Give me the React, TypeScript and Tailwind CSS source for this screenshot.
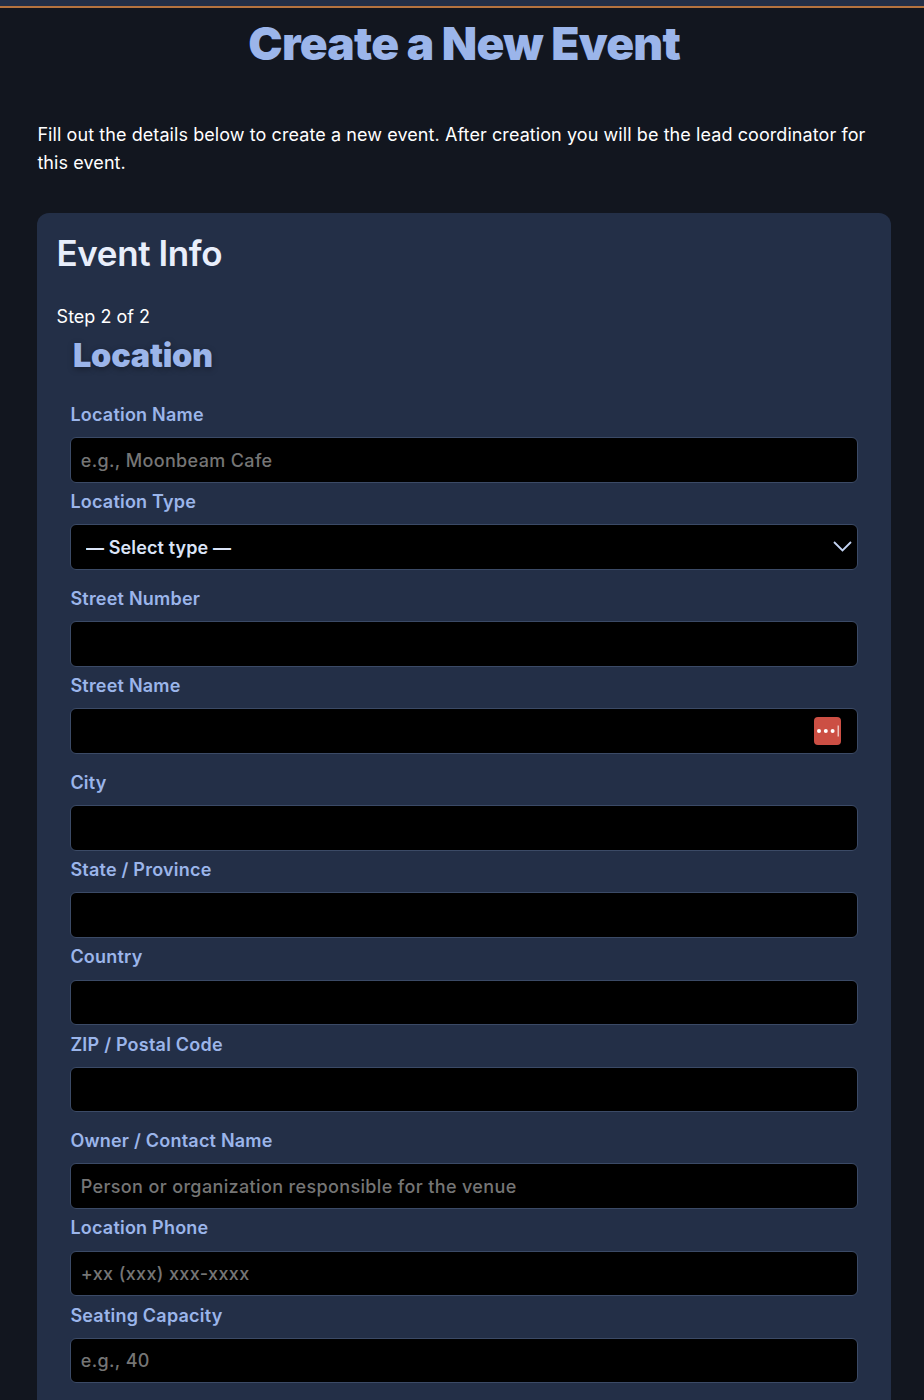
import React from 'react';

const labelCls = 'block h-[24px] text-[18px] leading-[24px] font-semibold tracking-[0.22px] text-[#9bb5ea]';
const inputCls =
  'block w-full h-[45.6px] rounded-[6px] border border-[#3b4a66] bg-black px-[9.4px] text-[18px] font-medium tracking-[0.36px] text-white placeholder:text-[#757575] outline-none';

type FieldProps = {
  label: string;
  placeholder?: string;
  gapTop?: string;
  lastpass?: boolean;
};

function Field({ label, placeholder, gapTop = 'mt-[7.4px]', lastpass }: FieldProps) {
  return (
    <div className={gapTop}>
      <label className={labelCls}>{label}</label>
      <div className="relative mt-[10.2px]">
        <input className={inputCls} placeholder={placeholder} />
        {lastpass && (
          <div className="absolute right-[16.5px] top-[9px] flex h-[27.5px] w-[27.5px] items-center justify-center rounded-[4px] bg-[#cc4f44]">
            <svg width="24" height="12" viewBox="0 0 24 12">
              <circle cx="3" cy="6" r="2" fill="#fff" />
              <circle cx="9.8" cy="6" r="2" fill="#fff" />
              <circle cx="16.6" cy="6" r="2" fill="#fff" />
              <rect x="21.6" y="0.5" width="1.2" height="11" fill="#f6dcd9" />
            </svg>
          </div>
        )}
      </div>
    </div>
  );
}

export default function App() {
  return (
    <div className="h-[1400px] overflow-hidden bg-[#12161f] font-['Inter',sans-serif] text-white">
      <div className="h-[8px] border-b-2 border-[#b5733f] bg-[#232f47]" />

      <div className="ml-[37.4px] mr-[33px]">
        <h1 className="mt-[8px] text-center text-[46px] leading-[54px] font-black tracking-[-0.75px] text-[#9bb5ea]">
          Create a New Event
        </h1>

        <p className="mt-[51px] text-[18px] leading-[28px] tracking-[0.08px] text-white">
          Fill out the details below to create a new event. After creation you will be the lead coordinator for this
          event.
        </p>

        <div className="mt-[36px] rounded-[12px] bg-[#232f47] px-[19.2px] pb-[40px] pt-[16px]">
          <h2 className="text-[35px] leading-[48px] font-semibold tracking-[-0.4px] text-[#e8eefb]">Event Info</h2>
          <p className="mt-[27px] text-[18px] leading-[26px] text-white">Step 2 of 2</p>

          <div className="pl-[13.8px] pr-[14px]">
            <h3 className="mt-[6px] pl-[2.6px] text-[32.4px] leading-[40px] font-black tracking-[-0.2px] text-[#9bb5ea] [text-shadow:0_2px_6px_rgba(0,0,0,0.35)]">
              Location
            </h3>

            <Field gapTop="mt-[27.1px]" label="Location Name" placeholder="e.g., Moonbeam Cafe" />

            <div className="mt-[7.4px]">
              <label className={labelCls}>Location Type</label>
              <div className="relative mt-[10.2px]">
                <select className="block h-[45.6px] w-full appearance-none rounded-[6px] border border-[#3b4a66] bg-black px-[14.6px] text-[18px] font-semibold tracking-[0.12px] text-[#dbe4f7] outline-none">
                  <option>— Select type —</option>
                </select>
                <svg
                  className="pointer-events-none absolute right-[6px] top-[17px]"
                  width="19"
                  height="11"
                  viewBox="0 0 19 11"
                  fill="none"
                  stroke="#c3d3f2"
                  strokeWidth="1.8"
                >
                  <path d="M1 1 L9.5 9.5 L18 1" />
                </svg>
              </div>
            </div>

            <Field gapTop="mt-[17px]" label="Street Number" />
            <Field label="Street Name" lastpass />
            <Field gapTop="mt-[17px]" label="City" />
            <Field label="State / Province" />
            <Field label="Country" />
            <Field label="ZIP / Postal Code" />
            <Field gapTop="mt-[17px]" label="Owner / Contact Name" placeholder="Person or organization responsible for the venue" />
            <Field label="Location Phone" placeholder="+xx (xxx) xxx-xxxx" />
            <Field label="Seating Capacity" placeholder="e.g., 40" />
          </div>
        </div>
      </div>
    </div>
  );
}
